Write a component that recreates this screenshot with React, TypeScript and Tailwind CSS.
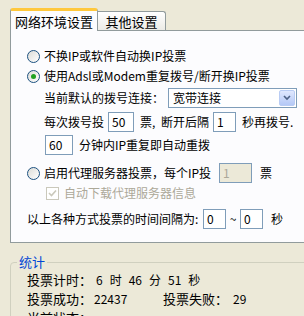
const font = { fontFamily: '"Noto Sans CJK SC", "Noto Sans", sans-serif' };

function Radio({ checked }: { checked?: boolean }) {
    return (
        <span className="relative w-[13px] h-[13px] rounded-full border border-[#1C5180] bg-gradient-to-br from-[#DCDCD7] to-[#FFFFFF] flex items-center justify-center shrink-0">
            {checked && <span className="w-[5px] h-[5px] rounded-full bg-[#21A121]" />}
        </span>
    );
}

function Input({ value, w, disabled }: { value: string; w: number; disabled?: boolean }) {
    return (
        <span
            className={`h-[20px] border border-[#7F9DB9] flex items-center pl-[3px] text-[12px] ${disabled ? "bg-[#ECE9D8] text-[#ACA899]" : "bg-white text-black"}`}
            style={{ width: w }}
        >
            {value}
        </span>
    );
}

export default function App() {
    return (
        <div className="w-[304px] h-[316px] bg-[#ECE9D8] overflow-hidden text-[12px] leading-none text-black" style={font}>
            <div className="flex items-end pl-[10px] pt-[8px] relative z-10">
                <div className="w-[88px] h-[23px] bg-[#FCFCFE] border-x border-[#919B9C] rounded-t-[3px] border-t-[3px] border-t-[#FFC83C] flex items-center justify-center text-[13px] -mb-px">
                    网络环境设置
                </div>
                <div className="w-[68px] h-[19px] bg-gradient-to-b from-[#FFFFFF] to-[#ECEBE6] border border-b-0 border-l-0 border-[#919B9C] rounded-tr-[3px] flex items-center justify-center text-[13px]">
                    其他设置
                </div>
            </div>

            <div className="ml-[10px] w-[300px] h-[213px] border border-[#919B9C] bg-[#FCFCFE] pt-[15px] flex flex-col">
                <div className="h-[20px] flex items-center gap-[4px] pl-[16px]">
                    <Radio />
                    <span>不换IP或软件自动换IP投票</span>
                </div>
                <div className="h-[20px] flex items-center gap-[4px] pl-[16px]">
                    <Radio checked />
                    <span>使用Adsl或Modem重复拨号/断开换IP投票</span>
                </div>
                <div className="mt-[2px] h-[20px] flex items-center pl-[33px]">
                    <span className="w-[124px]">当前默认的拨号连接：</span>
                    <div className="w-[129px] h-[20px] border border-[#7F9DB9] bg-white flex items-center justify-between pl-[4px] pr-px">
                        <span>宽带连接</span>
                        <span className="w-[16px] h-[16px] rounded-[2px] bg-gradient-to-b from-[#E0E8FE] to-[#B4C8F6] border border-[#B9CCF4] flex items-center justify-center">
                            <svg width="8" height="6" viewBox="0 0 8 6">
                                <path d="M1 1 L4 4 L7 1" fill="none" stroke="#4D6185" strokeWidth="1.6" />
                            </svg>
                        </span>
                    </div>
                </div>
                <div className="mt-[4px] h-[20px] flex items-center pl-[33px]">
                    <span className="w-[64px]">每次拨号投</span>
                    <Input value="50" w={26} />
                    <span className="w-[27px] pl-[6px]">票,</span>
                    <span className="w-[52px]">断开后隔</span>
                    <Input value="1" w={23} />
                    <span className="pl-[6px]">秒再拨号.</span>
                </div>
                <div className="mt-[3px] h-[20px] flex items-center pl-[34px]">
                    <Input value="60" w={28} />
                    <span className="pl-[6px]">分钟内IP重复即自动重拨</span>
                </div>
                <div className="mt-[8px] h-[20px] flex items-center pl-[16px]">
                    <Radio />
                    <span className="pl-[4px] w-[179px]">启用代理服务器投票，每个IP投</span>
                    <Input value="1" w={33} disabled />
                    <span className="pl-[8px]">票</span>
                </div>
                <div className="h-[20px] flex items-center pl-[35px] gap-[5px] text-[#ACA899]">
                    <span className="w-[13px] h-[13px] border border-[#CAC8BB] bg-white flex items-center justify-center">
                        <svg width="9" height="8" viewBox="0 0 9 8">
                            <path d="M1 4 L3.5 6.5 L8 1.5" fill="none" stroke="#CAC8BB" strokeWidth="1.6" />
                        </svg>
                    </span>
                    <span>自动下载代理服务器信息</span>
                </div>
                <div className="mt-[6px] h-[20px] flex items-center pl-[16px]">
                    <span className="w-[176px]">以上各种方式投票的时间间隔为:</span>
                    <Input value="0" w={23} />
                    <span className="w-[14px] text-center">~</span>
                    <Input value="0" w={23} />
                    <span className="pl-[8px]">秒</span>
                </div>
            </div>

            <div className="relative ml-[10px] mt-[19px] w-[300px] h-[80px] border border-[#D0D0BF] rounded-[4px] pt-[7px] pl-[16px]">
                <span className="absolute left-[6px] -top-[8px] bg-[#ECE9D8] px-[2px] text-[13px] text-[#0046D5]">统计</span>
                <div className="h-[19px] flex items-center">
                    <span className="w-[69px] text-[13px]">投票计时：</span>
                    <span className="flex gap-[7px]">
                        <span>6</span><span>时</span><span>46</span><span>分</span><span>51</span><span>秒</span>
                    </span>
                </div>
                <div className="h-[19px] flex items-center">
                    <span className="w-[67px] text-[13px]">投票成功：</span>
                    <span className="w-[69px]">22437</span>
                    <span className="w-[70px] text-[13px]">投票失败：</span>
                    <span>29</span>
                </div>
                <div className="h-[19px] flex items-center">
                    <span className="text-[13px]">当前状态：</span>
                </div>
            </div>
        </div>
    );
}
